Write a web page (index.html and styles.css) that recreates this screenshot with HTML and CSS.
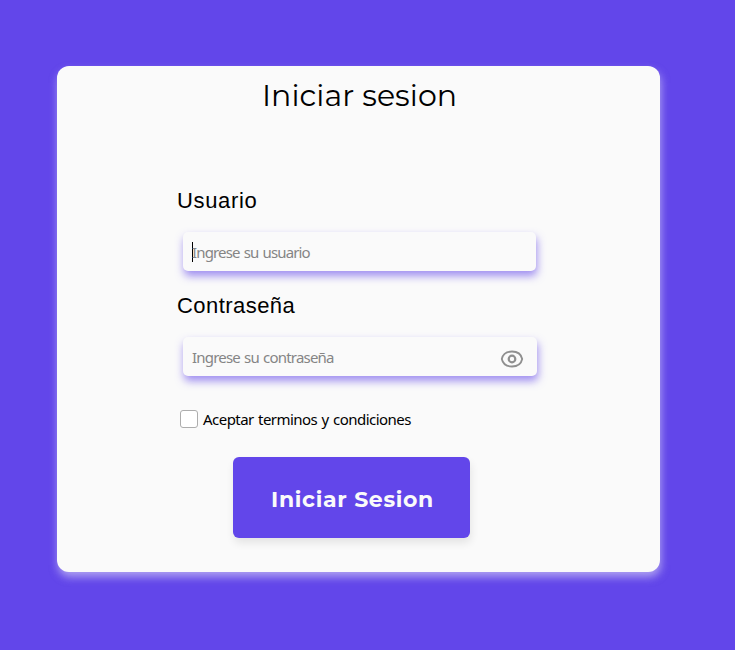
FILE: index.html
```html
<!DOCTYPE html>
<html lang="es">
<head>
<meta charset="utf-8">
<title>Iniciar sesion</title>
<link rel="stylesheet" href="styles.css">
</head>
<body>
<main class="card">
  <h1 class="title">Iniciar sesion</h1>
  <form class="form">
    <label class="label label-user" for="user">Usuario</label>
    <div class="field user-field"><span class="caret"></span><input id="user" class="input user-input" type="text" placeholder="Ingrese su usuario"></div>
    <label class="label label-pass" for="pass">Contraseña</label>
    <div class="field pass-field">
      <input id="pass" class="input pass-input" type="password" placeholder="Ingrese su contraseña">
      <svg class="eye" viewBox="0 0 24 18" fill="none" stroke="#8f8f8f" stroke-width="1.800">
        <path d="M1.800 9C2.800 4.400 6.500 1.500 12 1.500S21.200 4.400 22.200 9C21.200 13.600 17.500 16.500 12 16.500S2.800 13.600 1.800 9Z"/>
        <circle cx="12" cy="9" r="3.300" stroke-width="2.200"/>
      </svg>
    </div>
    <label class="terms"><input class="check" type="checkbox"><span class="terms-text">Aceptar terminos y condiciones</span></label>
    <button class="submit" type="button"><span class="submit-text">Iniciar Sesion</span></button>
  </form>
</main>
</body>
</html>
```
FILE: styles.css
```css
* { box-sizing: border-box; }
body {
  margin: 0;
  height: 650px;
  padding: 66px 0 0 57px;
  overflow: hidden;
  background: #6246ea;
  font-family: "Segoe UI", "Noto Sans", sans-serif;
}
.card {
  width: 603px;
  height: 506px;
  border-radius: 12px;
  background: #fafafa;
  box-shadow: 1px 5px 8px rgba(250, 250, 250, .5);
}
.title {
  margin: 0;
  padding: 10px 0 0 205px;
  font: 400 30px/40px Montserrat, Inter, sans-serif;
  letter-spacing: .06px;
  white-space: nowrap;
  color: #000;
}
.form {
  display: flex;
  flex-direction: column;
  align-items: flex-start;
  padding: 71px 0 0 120px;
}
.label {
  height: 28px;
  font: 22px/28px "Liberation Sans", sans-serif;
  color: #000;
}
.label-user { letter-spacing: .65px; }
.label-pass { margin-top: 21px; letter-spacing: .45px; }
.field {
  display: flex;
  align-items: center;
  height: 39px;
  margin: 17px 0 0 6px;
  padding: 0 13px 0 9px;
  border-radius: 5px;
  background: #fafafa;
  box-shadow: 1px 5px 8px rgba(98, 70, 234, .6);
}
.user-field { width: 353px; }
.pass-field { width: 354px; }
.caret { width: 1px; height: 20px; margin-right: -1px; background: #000; }
.input {
  flex: 1;
  min-width: 0;
  height: 30px;
  padding: 0;
  border: 0;
  outline: 0;
  background: transparent;
  font: 15px/30px "Segoe UI", "Noto Sans", sans-serif;
  letter-spacing: -.85px;
  word-spacing: 1px;
}
.pass-input { letter-spacing: -.8px; }
.input::placeholder { color: #858585; opacity: 1; }
.eye { width: 24px; height: 18px; margin-top: 5px; }
.terms {
  display: flex;
  align-items: center;
  height: 24px;
  margin: 31px 0 0 3px;
}
.check {
  appearance: none;
  width: 18px;
  height: 18px;
  margin: 0 5px 0 0;
  border: 1px solid #adadad;
  border-radius: 3px;
  background: #fff;
}
.terms-text {
  font-size: 15px;
  letter-spacing: -.54px;
  word-spacing: 1px;
  white-space: nowrap;
  color: #000;
}
.submit {
  width: 237px;
  height: 81px;
  margin: 26px 0 0 56px;
  padding: 5px 0 0 2px;
  border: 0;
  border-radius: 6px;
  background: #6246ea;
  box-shadow: 1px 5px 8px rgba(0, 0, 0, .09);
  color: #fafafa;
  font: 700 22px/28px Montserrat, Inter, sans-serif;
  letter-spacing: .65px;
}
```
